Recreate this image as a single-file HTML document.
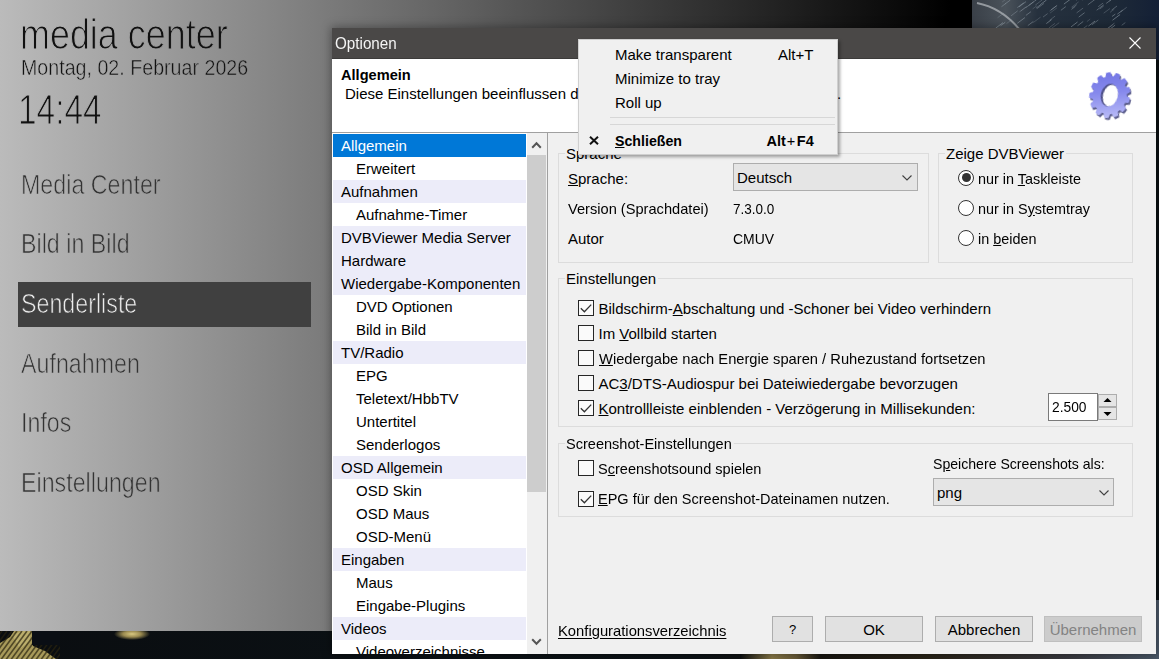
<!DOCTYPE html><html><head><meta charset="utf-8"><style>
html,body{margin:0;padding:0;width:1159px;height:659px;overflow:hidden;background:#0b1012}
.r{position:absolute}
.t{position:absolute;white-space:nowrap;font-family:"Liberation Sans",sans-serif}
u{text-decoration:underline;text-underline-offset:1px}
</style></head><body>
<div class="r" style="left:0px;top:600px;width:1159px;height:59px;background:linear-gradient(90deg,#0a0d10 0%,#0b1115 40%,#0c1216 60%,#171510 70%,#2a2418 80%,#3a3a40 92%,#4a5868 100%)"></div>
<svg class="r" style="left:0;top:631px" width="60" height="28" viewBox="0 0 60 28"><path d="M0 12 L10 6 L14 0 L32 0 L33 15 L45 20 L56 28 L0 28 Z" fill="#a89a5a"/><path d="M12 4 L22 0 L30 0 L30 10 L20 18 Z" fill="#c8bc78" fill-opacity="0.6"/><path d="M-20 30 L2 0" stroke="#2a2410" stroke-opacity="0.7" stroke-width="1.6"/><path d="M-15 30 L7 0" stroke="#2a2410" stroke-opacity="0.7" stroke-width="1.6"/><path d="M-10 30 L12 0" stroke="#2a2410" stroke-opacity="0.7" stroke-width="1.6"/><path d="M-5 30 L17 0" stroke="#2a2410" stroke-opacity="0.7" stroke-width="1.6"/><path d="M0 30 L22 0" stroke="#2a2410" stroke-opacity="0.7" stroke-width="1.6"/><path d="M5 30 L27 0" stroke="#2a2410" stroke-opacity="0.7" stroke-width="1.6"/><path d="M10 30 L32 0" stroke="#2a2410" stroke-opacity="0.7" stroke-width="1.6"/><path d="M15 30 L37 0" stroke="#2a2410" stroke-opacity="0.7" stroke-width="1.6"/><path d="M20 30 L42 0" stroke="#2a2410" stroke-opacity="0.7" stroke-width="1.6"/><path d="M25 30 L47 0" stroke="#2a2410" stroke-opacity="0.7" stroke-width="1.6"/><path d="M30 30 L52 0" stroke="#2a2410" stroke-opacity="0.7" stroke-width="1.6"/><path d="M35 30 L57 0" stroke="#2a2410" stroke-opacity="0.7" stroke-width="1.6"/><path d="M40 30 L62 0" stroke="#2a2410" stroke-opacity="0.7" stroke-width="1.6"/><path d="M45 30 L67 0" stroke="#2a2410" stroke-opacity="0.7" stroke-width="1.6"/><path d="M50 30 L72 0" stroke="#2a2410" stroke-opacity="0.7" stroke-width="1.6"/><path d="M55 30 L77 0" stroke="#2a2410" stroke-opacity="0.7" stroke-width="1.6"/><rect x="32" y="0" width="28" height="14" fill="#0a0e14"/></svg>
<div class="r" style="left:110px;top:631px;width:45px;height:10px;background:radial-gradient(ellipse 18px 6px at 22px 3px,#d8c880 0%,#9a8a50 50%,rgba(10,13,16,0) 100%)"></div>
<div class="r" style="left:740px;top:653px;width:80px;height:6px;background:linear-gradient(90deg,#0a0d10,#8a7a48 40%,#6a5c38 70%,#1a1812)"></div>
<svg class="r" style="left:972px;top:0" width="187" height="60" viewBox="0 0 187 60"><defs><linearGradient id="tr" x1="0" y1="0" x2="1" y2="0"><stop offset="0" stop-color="#3a4048"/><stop offset="0.18" stop-color="#4a525a"/><stop offset="0.35" stop-color="#26313e"/><stop offset="0.75" stop-color="#1e2a38"/><stop offset="1" stop-color="#142036"/></linearGradient></defs><rect width="187" height="60" fill="url(#tr)"/><path d="M5 3 Q 30 8 48 30" stroke="#b8bcc0" stroke-opacity="0.7" stroke-width="2" fill="none"/><path d="M53.9 15.4l5.0 -3.7" stroke="#9aa6b0" stroke-opacity="0.46" stroke-width="1"/><path d="M104.3 0.1l3.3 -2.4" stroke="#9aa6b0" stroke-opacity="0.54" stroke-width="1"/><path d="M56.7 5.5l8.0 -6.0" stroke="#9aa6b0" stroke-opacity="0.41" stroke-width="1"/><path d="M131.7 13.2l6.3 -4.7" stroke="#9aa6b0" stroke-opacity="0.30" stroke-width="1"/><path d="M105.5 25.8l5.7 -4.3" stroke="#9aa6b0" stroke-opacity="0.51" stroke-width="1"/><path d="M110.3 0.0l6.8 -5.1" stroke="#9aa6b0" stroke-opacity="0.46" stroke-width="1"/><path d="M62.2 -1.0l7.4 -5.5" stroke="#9aa6b0" stroke-opacity="0.42" stroke-width="1"/><path d="M116.4 26.1l6.6 -5.0" stroke="#9aa6b0" stroke-opacity="0.57" stroke-width="1"/><path d="M74.3 23.6l5.3 -4.0" stroke="#9aa6b0" stroke-opacity="0.58" stroke-width="1"/><path d="M137.3 1.1l3.9 -2.9" stroke="#9aa6b0" stroke-opacity="0.33" stroke-width="1"/><path d="M148.5 12.0l6.2 -4.7" stroke="#9aa6b0" stroke-opacity="0.36" stroke-width="1"/><path d="M88.9 10.3l4.9 -3.7" stroke="#9aa6b0" stroke-opacity="0.45" stroke-width="1"/><path d="M99.0 26.9l6.5 -4.9" stroke="#9aa6b0" stroke-opacity="0.58" stroke-width="1"/><path d="M134.3 29.7l6.4 -4.8" stroke="#9aa6b0" stroke-opacity="0.31" stroke-width="1"/><path d="M134.9 28.9l7.5 -5.7" stroke="#9aa6b0" stroke-opacity="0.45" stroke-width="1"/><path d="M115.8 4.8l7.2 -5.4" stroke="#9aa6b0" stroke-opacity="0.45" stroke-width="1"/><path d="M60.0 0.0l7.3 -5.5" stroke="#9aa6b0" stroke-opacity="0.60" stroke-width="1"/><path d="M34.5 23.6l5.2 -3.9" stroke="#9aa6b0" stroke-opacity="0.30" stroke-width="1"/><path d="M61.2 22.6l7.4 -5.5" stroke="#9aa6b0" stroke-opacity="0.27" stroke-width="1"/><path d="M102.9 -0.6l6.6 -5.0" stroke="#9aa6b0" stroke-opacity="0.37" stroke-width="1"/><path d="M137.5 29.4l5.6 -4.2" stroke="#9aa6b0" stroke-opacity="0.60" stroke-width="1"/><path d="M63.3 0.5l6.1 -4.6" stroke="#9aa6b0" stroke-opacity="0.26" stroke-width="1"/><path d="M48.7 11.1l6.1 -4.6" stroke="#9aa6b0" stroke-opacity="0.30" stroke-width="1"/><path d="M28.5 25.8l4.7 -3.5" stroke="#9aa6b0" stroke-opacity="0.59" stroke-width="1"/><path d="M139.6 10.1l5.4 -4.1" stroke="#9aa6b0" stroke-opacity="0.43" stroke-width="1"/><path d="M106.7 17.1l5.9 -4.4" stroke="#9aa6b0" stroke-opacity="0.47" stroke-width="1"/><path d="M145.3 14.2l5.3 -4.0" stroke="#9aa6b0" stroke-opacity="0.50" stroke-width="1"/><path d="M53.9 7.6l7.9 -5.9" stroke="#9aa6b0" stroke-opacity="0.43" stroke-width="1"/><path d="M94.3 -1.6l5.2 -3.9" stroke="#9aa6b0" stroke-opacity="0.45" stroke-width="1"/><path d="M25.6 17.7l6.2 -4.7" stroke="#9aa6b0" stroke-opacity="0.27" stroke-width="1"/><path d="M104.6 12.9l6.5 -4.8" stroke="#9aa6b0" stroke-opacity="0.37" stroke-width="1"/><path d="M114.9 21.6l3.3 -2.5" stroke="#9aa6b0" stroke-opacity="0.27" stroke-width="1"/><path d="M110.9 28.8l4.4 -3.3" stroke="#9aa6b0" stroke-opacity="0.41" stroke-width="1"/><path d="M100.0 8.2l4.9 -3.7" stroke="#9aa6b0" stroke-opacity="0.36" stroke-width="1"/><path d="M71.0 17.1l4.6 -3.5" stroke="#9aa6b0" stroke-opacity="0.38" stroke-width="1"/><path d="M123.4 -1.1l5.9 -4.4" stroke="#9aa6b0" stroke-opacity="0.51" stroke-width="1"/><path d="M63.3 5.1l7.1 -5.3" stroke="#9aa6b0" stroke-opacity="0.33" stroke-width="1"/><path d="M47.4 11.9l6.6 -4.9" stroke="#9aa6b0" stroke-opacity="0.29" stroke-width="1"/><path d="M64.9 8.7l7.2 -5.4" stroke="#9aa6b0" stroke-opacity="0.40" stroke-width="1"/><path d="M134.2 3.4l4.8 -3.6" stroke="#9aa6b0" stroke-opacity="0.48" stroke-width="1"/><path d="M138.0 12.4l4.3 -3.2" stroke="#9aa6b0" stroke-opacity="0.29" stroke-width="1"/><path d="M91.9 4.1l7.1 -5.3" stroke="#9aa6b0" stroke-opacity="0.54" stroke-width="1"/><path d="M46.9 6.9l7.1 -5.3" stroke="#9aa6b0" stroke-opacity="0.47" stroke-width="1"/><path d="M127.8 9.0l3.8 -2.9" stroke="#9aa6b0" stroke-opacity="0.35" stroke-width="1"/><path d="M126.2 6.7l4.9 -3.6" stroke="#9aa6b0" stroke-opacity="0.40" stroke-width="1"/><path d="M77.6 11.1l7.6 -5.7" stroke="#9aa6b0" stroke-opacity="0.30" stroke-width="1"/><path d="M23.6 28.2l7.4 -5.6" stroke="#9aa6b0" stroke-opacity="0.60" stroke-width="1"/><path d="M79.5 28.4l7.7 -5.7" stroke="#9aa6b0" stroke-opacity="0.33" stroke-width="1"/><path d="M119.9 24.8l6.4 -4.8" stroke="#9aa6b0" stroke-opacity="0.43" stroke-width="1"/><path d="M60.6 8.9l4.3 -3.2" stroke="#9aa6b0" stroke-opacity="0.27" stroke-width="1"/><path d="M99.5 7.2l7.1 -5.3" stroke="#9aa6b0" stroke-opacity="0.27" stroke-width="1"/><path d="M140.5 20.2l7.6 -5.7" stroke="#9aa6b0" stroke-opacity="0.56" stroke-width="1"/><path d="M140.0 16.5l3.3 -2.4" stroke="#9aa6b0" stroke-opacity="0.51" stroke-width="1"/><path d="M45.3 7.6l6.4 -4.8" stroke="#9aa6b0" stroke-opacity="0.43" stroke-width="1"/><path d="M76.8 28.0l6.1 -4.6" stroke="#9aa6b0" stroke-opacity="0.37" stroke-width="1"/><path d="M55.8 25.6l5.5 -4.1" stroke="#9aa6b0" stroke-opacity="0.52" stroke-width="1"/><path d="M68.7 4.3l5.8 -4.3" stroke="#9aa6b0" stroke-opacity="0.54" stroke-width="1"/><path d="M45.3 23.3l7.6 -5.7" stroke="#9aa6b0" stroke-opacity="0.53" stroke-width="1"/><path d="M130.1 -1.8l6.2 -4.7" stroke="#9aa6b0" stroke-opacity="0.55" stroke-width="1"/><path d="M29.5 6.7l4.5 -3.4" stroke="#9aa6b0" stroke-opacity="0.43" stroke-width="1"/><path d="M78.0 13.1l6.9 -5.2" stroke="#9aa6b0" stroke-opacity="0.25" stroke-width="1"/><path d="M30.1 2.1l3.8 -2.8" stroke="#9aa6b0" stroke-opacity="0.27" stroke-width="1"/><path d="M149.7 25.3l3.6 -2.7" stroke="#9aa6b0" stroke-opacity="0.43" stroke-width="1"/><path d="M64.1 8.1l4.9 -3.7" stroke="#9aa6b0" stroke-opacity="0.48" stroke-width="1"/><path d="M99.3 9.5l4.1 -3.1" stroke="#9aa6b0" stroke-opacity="0.37" stroke-width="1"/><path d="M39.1 15.8l6.6 -5.0" stroke="#9aa6b0" stroke-opacity="0.38" stroke-width="1"/><path d="M33.4 3.7l5.0 -3.7" stroke="#9aa6b0" stroke-opacity="0.46" stroke-width="1"/><path d="M124.7 10.2l7.0 -5.3" stroke="#9aa6b0" stroke-opacity="0.47" stroke-width="1"/><path d="M79.1 9.9l5.6 -4.2" stroke="#9aa6b0" stroke-opacity="0.50" stroke-width="1"/><path d="M77.7 20.2l5.4 -4.1" stroke="#9aa6b0" stroke-opacity="0.34" stroke-width="1"/></svg>
<div class="r" style="left:0px;top:0px;width:972px;height:631px;background:linear-gradient(90deg,#bbbbbb 0%,#000 950px)"></div>
<div class="t" style="left:20px;top:13.10px;font-size:43px;line-height:43px;font-weight:400;color:#111;transform:scaleX(0.835);transform-origin:0 0;"><span style="-webkit-text-stroke:1.1px rgb(180,180,180)">m</span><span style="-webkit-text-stroke:1.1px rgb(175,175,175)">e</span><span style="-webkit-text-stroke:1.1px rgb(171,171,171)">d</span><span style="-webkit-text-stroke:1.1px rgb(169,169,169)">i</span><span style="-webkit-text-stroke:1.1px rgb(166,166,166)">a</span><span style="-webkit-text-stroke:1.1px rgb(163,163,163)"> </span><span style="-webkit-text-stroke:1.1px rgb(160,160,160)">c</span><span style="-webkit-text-stroke:1.1px rgb(156,156,156)">e</span><span style="-webkit-text-stroke:1.1px rgb(152,152,152)">n</span><span style="-webkit-text-stroke:1.1px rgb(149,149,149)">t</span><span style="-webkit-text-stroke:1.1px rgb(147,147,147)">e</span><span style="-webkit-text-stroke:1.1px rgb(143,143,143)">r</span></div>
<div class="t" style="left:20.5px;top:57.38px;font-size:22px;line-height:22px;font-weight:400;color:#111;transform:scaleX(0.892);transform-origin:0 0;"><span style="-webkit-text-stroke:0.5px rgb(181,181,181)">M</span><span style="-webkit-text-stroke:0.5px rgb(179,179,179)">o</span><span style="-webkit-text-stroke:0.5px rgb(177,177,177)">n</span><span style="-webkit-text-stroke:0.5px rgb(175,175,175)">t</span><span style="-webkit-text-stroke:0.5px rgb(173,173,173)">a</span><span style="-webkit-text-stroke:0.5px rgb(171,171,171)">g</span><span style="-webkit-text-stroke:0.5px rgb(170,170,170)">,</span><span style="-webkit-text-stroke:0.5px rgb(168,168,168)"> </span><span style="-webkit-text-stroke:0.5px rgb(167,167,167)">0</span><span style="-webkit-text-stroke:0.5px rgb(165,165,165)">2</span><span style="-webkit-text-stroke:0.5px rgb(163,163,163)">.</span><span style="-webkit-text-stroke:0.5px rgb(162,162,162)"> </span><span style="-webkit-text-stroke:0.5px rgb(160,160,160)">F</span><span style="-webkit-text-stroke:0.5px rgb(158,158,158)">e</span><span style="-webkit-text-stroke:0.5px rgb(156,156,156)">b</span><span style="-webkit-text-stroke:0.5px rgb(154,154,154)">r</span><span style="-webkit-text-stroke:0.5px rgb(152,152,152)">u</span><span style="-webkit-text-stroke:0.5px rgb(150,150,150)">a</span><span style="-webkit-text-stroke:0.5px rgb(149,149,149)">r</span><span style="-webkit-text-stroke:0.5px rgb(147,147,147)"> </span><span style="-webkit-text-stroke:0.5px rgb(146,146,146)">2</span><span style="-webkit-text-stroke:0.5px rgb(144,144,144)">0</span><span style="-webkit-text-stroke:0.5px rgb(142,142,142)">2</span><span style="-webkit-text-stroke:0.5px rgb(139,139,139)">6</span></div>
<div class="t" style="left:18px;top:88.65px;font-size:42px;line-height:42px;font-weight:400;color:#111;transform:scaleX(0.795);transform-origin:0 0;"><span style="-webkit-text-stroke:1.1px rgb(182,182,182)">1</span><span style="-webkit-text-stroke:1.1px rgb(178,178,178)">4</span><span style="-webkit-text-stroke:1.1px rgb(175,175,175)">:</span><span style="-webkit-text-stroke:1.1px rgb(172,172,172)">4</span><span style="-webkit-text-stroke:1.1px rgb(169,169,169)">4</span></div>
<div class="r" style="left:18px;top:282px;width:293px;height:45px;background:#404040"></div>
<div class="t" style="left:20.5px;top:170.52px;font-size:27.5px;line-height:27.5px;font-weight:400;color:#333;transform:scaleX(0.845);transform-origin:0 0;"><span style="-webkit-text-stroke:0.7px rgb(181,181,181)">M</span><span style="-webkit-text-stroke:0.7px rgb(178,178,178)">e</span><span style="-webkit-text-stroke:0.7px rgb(175,175,175)">d</span><span style="-webkit-text-stroke:0.7px rgb(174,174,174)">i</span><span style="-webkit-text-stroke:0.7px rgb(172,172,172)">a</span><span style="-webkit-text-stroke:0.7px rgb(170,170,170)"> </span><span style="-webkit-text-stroke:0.7px rgb(168,168,168)">C</span><span style="-webkit-text-stroke:0.7px rgb(165,165,165)">e</span><span style="-webkit-text-stroke:0.7px rgb(162,162,162)">n</span><span style="-webkit-text-stroke:0.7px rgb(160,160,160)">t</span><span style="-webkit-text-stroke:0.7px rgb(158,158,158)">e</span><span style="-webkit-text-stroke:0.7px rgb(156,156,156)">r</span></div>
<div class="t" style="left:20.5px;top:230.24px;font-size:27.5px;line-height:27.5px;font-weight:400;color:#333;transform:scaleX(0.845);transform-origin:0 0;"><span style="-webkit-text-stroke:0.7px rgb(181,181,181)">B</span><span style="-webkit-text-stroke:0.7px rgb(179,179,179)">i</span><span style="-webkit-text-stroke:0.7px rgb(178,178,178)">l</span><span style="-webkit-text-stroke:0.7px rgb(177,177,177)">d</span><span style="-webkit-text-stroke:0.7px rgb(175,175,175)"> </span><span style="-webkit-text-stroke:0.7px rgb(174,174,174)">i</span><span style="-webkit-text-stroke:0.7px rgb(172,172,172)">n</span><span style="-webkit-text-stroke:0.7px rgb(170,170,170)"> </span><span style="-webkit-text-stroke:0.7px rgb(168,168,168)">B</span><span style="-webkit-text-stroke:0.7px rgb(166,166,166)">i</span><span style="-webkit-text-stroke:0.7px rgb(165,165,165)">l</span><span style="-webkit-text-stroke:0.7px rgb(163,163,163)">d</span></div>
<div class="t" style="left:20.5px;top:290.46px;font-size:27.5px;line-height:27.5px;font-weight:400;color:#ececec;transform:scaleX(0.845);transform-origin:0 0;-webkit-text-stroke:0.7px #404040;">Senderliste</div>
<div class="t" style="left:20.5px;top:349.68px;font-size:27.5px;line-height:27.5px;font-weight:400;color:#333;transform:scaleX(0.845);transform-origin:0 0;"><span style="-webkit-text-stroke:0.7px rgb(181,181,181)">A</span><span style="-webkit-text-stroke:0.7px rgb(179,179,179)">u</span><span style="-webkit-text-stroke:0.7px rgb(177,177,177)">f</span><span style="-webkit-text-stroke:0.7px rgb(175,175,175)">n</span><span style="-webkit-text-stroke:0.7px rgb(172,172,172)">a</span><span style="-webkit-text-stroke:0.7px rgb(170,170,170)">h</span><span style="-webkit-text-stroke:0.7px rgb(167,167,167)">m</span><span style="-webkit-text-stroke:0.7px rgb(163,163,163)">e</span><span style="-webkit-text-stroke:0.7px rgb(161,161,161)">n</span></div>
<div class="t" style="left:20.5px;top:409.40px;font-size:27.5px;line-height:27.5px;font-weight:400;color:#333;transform:scaleX(0.845);transform-origin:0 0;"><span style="-webkit-text-stroke:0.7px rgb(182,182,182)">I</span><span style="-webkit-text-stroke:0.7px rgb(180,180,180)">n</span><span style="-webkit-text-stroke:0.7px rgb(179,179,179)">f</span><span style="-webkit-text-stroke:0.7px rgb(177,177,177)">o</span><span style="-webkit-text-stroke:0.7px rgb(174,174,174)">s</span></div>
<div class="t" style="left:20.5px;top:469.12px;font-size:27.5px;line-height:27.5px;font-weight:400;color:#333;transform:scaleX(0.845);transform-origin:0 0;"><span style="-webkit-text-stroke:0.7px rgb(181,181,181)">E</span><span style="-webkit-text-stroke:0.7px rgb(179,179,179)">i</span><span style="-webkit-text-stroke:0.7px rgb(178,178,178)">n</span><span style="-webkit-text-stroke:0.7px rgb(175,175,175)">s</span><span style="-webkit-text-stroke:0.7px rgb(173,173,173)">t</span><span style="-webkit-text-stroke:0.7px rgb(172,172,172)">e</span><span style="-webkit-text-stroke:0.7px rgb(170,170,170)">l</span><span style="-webkit-text-stroke:0.7px rgb(169,169,169)">l</span><span style="-webkit-text-stroke:0.7px rgb(167,167,167)">u</span><span style="-webkit-text-stroke:0.7px rgb(164,164,164)">n</span><span style="-webkit-text-stroke:0.7px rgb(162,162,162)">g</span><span style="-webkit-text-stroke:0.7px rgb(159,159,159)">e</span><span style="-webkit-text-stroke:0.7px rgb(157,157,157)">n</span></div>
<div class="r" style="left:332px;top:28px;width:824px;height:626px;background:#f0f0f0;box-shadow:0 0 9px 1px rgba(0,0,0,0.35)"></div>
<div class="r" style="left:332px;top:28px;width:824px;height:31px;background:#4a4847;border-bottom:1px solid #3c3b3a;box-sizing:border-box"></div>
<div class="t" style="left:335px;top:35.66px;font-size:16px;line-height:16px;font-weight:400;color:#f4f4f4;transform:scaleX(0.95);transform-origin:0 0;">Optionen</div>
<svg class="r" style="left:1129px;top:37px" width="12" height="12" viewBox="0 0 12 12"><path d="M0.5 0.5L11.5 11.5M11.5 0.5L0.5 11.5" stroke="#fff" stroke-width="1.1"/></svg>
<div class="r" style="left:332px;top:59px;width:824px;height:73px;background:#fff"></div>
<div class="r" style="left:332px;top:132px;width:824px;height:1px;background:#a0a0a0"></div>
<div class="t" style="left:341px;top:67.64px;font-size:14.6px;line-height:14.6px;font-weight:700;color:#000;">Allgemein</div>
<div class="t" style="left:345px;top:86.30px;font-size:15px;line-height:15px;font-weight:400;color:#000;">Diese Einstellungen beeinflussen das Verhalten</div>
<div class="t" style="left:837px;top:86.30px;font-size:15px;line-height:15px;font-weight:400;color:#000;">.</div>
<div class="r" style="left:0;top:0;width:1159px;height:654px;overflow:hidden">
<div class="r" style="left:332px;top:133px;width:216px;height:521px;background:#fff"></div>
<div class="r" style="left:333px;top:134px;width:193px;height:23px;background:#0078d7"></div>
<div class="t" style="left:341px;top:138.30px;font-size:15px;line-height:15px;font-weight:400;color:#fff;">Allgemein</div>
<div class="t" style="left:356px;top:161.30px;font-size:15px;line-height:15px;font-weight:400;color:#000;">Erweitert</div>
<div class="r" style="left:333px;top:180px;width:193px;height:23px;background:#ececf9"></div>
<div class="t" style="left:341px;top:184.30px;font-size:15px;line-height:15px;font-weight:400;color:#000;">Aufnahmen</div>
<div class="t" style="left:356px;top:207.30px;font-size:15px;line-height:15px;font-weight:400;color:#000;">Aufnahme-Timer</div>
<div class="r" style="left:333px;top:226px;width:193px;height:23px;background:#ececf9"></div>
<div class="t" style="left:341px;top:230.30px;font-size:15px;line-height:15px;font-weight:400;color:#000;">DVBViewer Media Server</div>
<div class="r" style="left:333px;top:249px;width:193px;height:23px;background:#ececf9"></div>
<div class="t" style="left:341px;top:253.30px;font-size:15px;line-height:15px;font-weight:400;color:#000;">Hardware</div>
<div class="r" style="left:333px;top:272px;width:193px;height:23px;background:#ececf9"></div>
<div class="t" style="left:341px;top:276.30px;font-size:15px;line-height:15px;font-weight:400;color:#000;">Wiedergabe-Komponenten</div>
<div class="t" style="left:356px;top:299.30px;font-size:15px;line-height:15px;font-weight:400;color:#000;">DVD Optionen</div>
<div class="t" style="left:356px;top:322.30px;font-size:15px;line-height:15px;font-weight:400;color:#000;">Bild in Bild</div>
<div class="r" style="left:333px;top:341px;width:193px;height:23px;background:#ececf9"></div>
<div class="t" style="left:341px;top:345.30px;font-size:15px;line-height:15px;font-weight:400;color:#000;">TV/Radio</div>
<div class="t" style="left:356px;top:368.30px;font-size:15px;line-height:15px;font-weight:400;color:#000;">EPG</div>
<div class="t" style="left:356px;top:391.30px;font-size:15px;line-height:15px;font-weight:400;color:#000;">Teletext/HbbTV</div>
<div class="t" style="left:356px;top:414.30px;font-size:15px;line-height:15px;font-weight:400;color:#000;">Untertitel</div>
<div class="t" style="left:356px;top:437.30px;font-size:15px;line-height:15px;font-weight:400;color:#000;">Senderlogos</div>
<div class="r" style="left:333px;top:456px;width:193px;height:23px;background:#ececf9"></div>
<div class="t" style="left:341px;top:460.30px;font-size:15px;line-height:15px;font-weight:400;color:#000;">OSD Allgemein</div>
<div class="t" style="left:356px;top:483.30px;font-size:15px;line-height:15px;font-weight:400;color:#000;">OSD Skin</div>
<div class="t" style="left:356px;top:506.30px;font-size:15px;line-height:15px;font-weight:400;color:#000;">OSD Maus</div>
<div class="t" style="left:356px;top:529.30px;font-size:15px;line-height:15px;font-weight:400;color:#000;">OSD-Menü</div>
<div class="r" style="left:333px;top:548px;width:193px;height:23px;background:#ececf9"></div>
<div class="t" style="left:341px;top:552.30px;font-size:15px;line-height:15px;font-weight:400;color:#000;">Eingaben</div>
<div class="t" style="left:356px;top:575.30px;font-size:15px;line-height:15px;font-weight:400;color:#000;">Maus</div>
<div class="t" style="left:356px;top:598.30px;font-size:15px;line-height:15px;font-weight:400;color:#000;">Eingabe-Plugins</div>
<div class="r" style="left:333px;top:617px;width:193px;height:23px;background:#ececf9"></div>
<div class="t" style="left:341px;top:621.30px;font-size:15px;line-height:15px;font-weight:400;color:#000;">Videos</div>
<div class="t" style="left:356px;top:644.30px;font-size:15px;line-height:15px;font-weight:400;color:#000;">Videoverzeichnisse</div>
<div class="r" style="left:527px;top:133px;width:20px;height:521px;background:#f0f0f0"></div>
<div class="r" style="left:527px;top:155px;width:19px;height:337px;background:#cdcdcd"></div>
<svg class="r" style="left:531px;top:141px" width="11" height="8" viewBox="0 0 11 8"><path d="M1.2 6.8L5.5 2.3L9.8 6.8" stroke="#555" stroke-width="2" fill="none"/></svg>
<svg class="r" style="left:531px;top:638px" width="11" height="8" viewBox="0 0 11 8"><path d="M1.2 1.2L5.5 5.7L9.8 1.2" stroke="#555" stroke-width="2" fill="none"/></svg>
<div class="r" style="left:547px;top:133px;width:1px;height:521px;background:#a0a0a0"></div>
</div>
<div class="r" style="left:558px;top:153px;width:371px;height:110px;border:1px solid #dcdcdc;box-sizing:border-box"></div>
<div class="t" style="left:566px;top:146.00px;font-size:15px;line-height:15px;font-weight:400;color:#000;margin-left:-1px;transform:scaleX(1);transform-origin:0 0;"><span style="background:#f0f0f0;padding:0 2px 0 1px">Sprache</span></div>
<div class="t" style="left:568px;top:171.00px;font-size:15px;line-height:15px;font-weight:400;color:#000;"><u>S</u>prache:</div>
<div class="r" style="left:733px;top:163px;width:185px;height:28px;background:#e5e5e5;border:1px solid #adadad;box-sizing:border-box"></div>
<div class="t" style="left:737px;top:170.30px;font-size:15px;line-height:15px;font-weight:400;color:#000;">Deutsch</div>
<svg class="r" style="left:900px;top:173.5px" width="14" height="8" viewBox="0 0 14 8"><path d="M2.5 1.5L7 6L11.5 1.5" stroke="#404040" stroke-width="1.1" fill="none"/></svg>
<div class="t" style="left:568px;top:200.80px;font-size:15px;line-height:15px;font-weight:400;color:#000;transform:scaleX(0.975);transform-origin:0 0;">Version (Sprachdatei)</div>
<div class="t" style="left:733px;top:200.80px;font-size:15px;line-height:15px;font-weight:400;color:#000;transform:scaleX(0.9);transform-origin:0 0;">7.3.0.0</div>
<div class="t" style="left:568px;top:230.80px;font-size:15px;line-height:15px;font-weight:400;color:#000;">Autor</div>
<div class="t" style="left:733px;top:230.80px;font-size:15px;line-height:15px;font-weight:400;color:#000;transform:scaleX(0.93);transform-origin:0 0;">CMUV</div>
<div class="r" style="left:938px;top:153px;width:195px;height:110px;border:1px solid #dcdcdc;box-sizing:border-box"></div>
<div class="t" style="left:946px;top:146.00px;font-size:15px;line-height:15px;font-weight:400;color:#000;margin-left:-1px;transform:scaleX(1);transform-origin:0 0;"><span style="background:#f0f0f0;padding:0 2px 0 1px">Zeige DVBViewer</span></div>
<div class="r" style="left:958px;top:169.8px;width:16px;height:16px;border:1.2px solid #333;border-radius:50%;background:#fff;box-sizing:border-box"></div>
<div class="r" style="left:961.5px;top:173.3px;width:9px;height:9px;border-radius:50%;background:#333"></div>
<div class="t" style="left:978px;top:170.70px;font-size:15px;line-height:15px;font-weight:400;color:#000;transform:scaleX(0.96);transform-origin:0 0;">nur in <u>T</u>askleiste</div>
<div class="r" style="left:958px;top:199.8px;width:16px;height:16px;border:1.2px solid #333;border-radius:50%;background:#fff;box-sizing:border-box"></div>
<div class="t" style="left:978px;top:200.70px;font-size:15px;line-height:15px;font-weight:400;color:#000;transform:scaleX(0.96);transform-origin:0 0;">nur in S<u>y</u>stemtray</div>
<div class="r" style="left:958px;top:229.8px;width:16px;height:16px;border:1.2px solid #333;border-radius:50%;background:#fff;box-sizing:border-box"></div>
<div class="t" style="left:978px;top:230.70px;font-size:15px;line-height:15px;font-weight:400;color:#000;transform:scaleX(0.96);transform-origin:0 0;">in <u>b</u>eiden</div>
<div class="r" style="left:558px;top:278px;width:575px;height:149px;border:1px solid #dcdcdc;box-sizing:border-box"></div>
<div class="t" style="left:566px;top:270.90px;font-size:15px;line-height:15px;font-weight:400;color:#000;margin-left:-1px;transform:scaleX(1);transform-origin:0 0;"><span style="background:#f0f0f0;padding:0 2px 0 1px">Einstellungen</span></div>
<div class="r" style="left:578px;top:300px;width:16px;height:16px;border:1.2px solid #262626;background:#fafafa;box-sizing:border-box"></div>
<svg class="r" style="left:578px;top:300px" width="16" height="16" viewBox="0 0 16 16"><path d="M2.8 8.3L6.4 11.8L13.2 4.6" stroke="#333" stroke-width="1.3" fill="none"/></svg>
<div class="t" style="left:598.5px;top:301.10px;font-size:15px;line-height:15px;font-weight:400;color:#000;">Bildschirm-<u>A</u>bschaltung und -Schoner bei Video verhindern</div>
<div class="r" style="left:578px;top:325px;width:16px;height:16px;border:1.2px solid #262626;background:#fafafa;box-sizing:border-box"></div>
<div class="t" style="left:598.5px;top:326.10px;font-size:15px;line-height:15px;font-weight:400;color:#000;">Im <u>V</u>ollbild starten</div>
<div class="r" style="left:578px;top:350px;width:16px;height:16px;border:1.2px solid #262626;background:#fafafa;box-sizing:border-box"></div>
<div class="t" style="left:598.5px;top:351.10px;font-size:15px;line-height:15px;font-weight:400;color:#000;transform:scaleX(0.98);transform-origin:0 0;"><u>W</u>iedergabe nach Energie sparen / Ruhezustand fortsetzen</div>
<div class="r" style="left:578px;top:375px;width:16px;height:16px;border:1.2px solid #262626;background:#fafafa;box-sizing:border-box"></div>
<div class="t" style="left:598.5px;top:376.10px;font-size:15px;line-height:15px;font-weight:400;color:#000;">AC<u>3</u>/DTS-Audiospur bei Dateiwiedergabe bevorzugen</div>
<div class="r" style="left:578px;top:400px;width:16px;height:16px;border:1.2px solid #262626;background:#fafafa;box-sizing:border-box"></div>
<svg class="r" style="left:578px;top:400px" width="16" height="16" viewBox="0 0 16 16"><path d="M2.8 8.3L6.4 11.8L13.2 4.6" stroke="#333" stroke-width="1.3" fill="none"/></svg>
<div class="t" style="left:598.5px;top:401.10px;font-size:15px;line-height:15px;font-weight:400;color:#000;"><u>K</u>ontrollleiste einblenden - Verzögerung in Millisekunden:</div>
<div class="r" style="left:1048px;top:393px;width:50px;height:28px;background:#fff;border:1px solid #7a7a7a;box-sizing:border-box"></div>
<div class="t" style="left:1051.5px;top:399.10px;font-size:15px;line-height:15px;font-weight:400;color:#000;transform:scaleX(0.92);transform-origin:0 0;">2.500</div>
<div class="r" style="left:1098px;top:394px;width:19px;height:13px;background:#e5e5e5;border:1px solid #adadad;box-sizing:border-box"></div>
<div class="r" style="left:1098px;top:407px;width:19px;height:13px;background:#e5e5e5;border:1px solid #adadad;box-sizing:border-box"></div>
<svg class="r" style="left:1103px;top:397px" width="9" height="6" viewBox="0 0 9 6"><path d="M0.5 5L4.5 1L8.5 5Z" fill="#000"/></svg>
<svg class="r" style="left:1103px;top:411px" width="9" height="6" viewBox="0 0 9 6"><path d="M0.5 1L4.5 5L8.5 1Z" fill="#000"/></svg>
<div class="r" style="left:558px;top:443px;width:575px;height:74px;border:1px solid #dcdcdc;box-sizing:border-box"></div>
<div class="t" style="left:566px;top:435.90px;font-size:15px;line-height:15px;font-weight:400;color:#000;margin-left:-1px;transform:scaleX(0.97);transform-origin:0 0;"><span style="background:#f0f0f0;padding:0 2px 0 1px">Screenshot-Einstellungen</span></div>
<div class="r" style="left:578px;top:460px;width:16px;height:16px;border:1.2px solid #262626;background:#fafafa;box-sizing:border-box"></div>
<div class="t" style="left:598px;top:461.30px;font-size:15px;line-height:15px;font-weight:400;color:#000;transform:scaleX(0.97);transform-origin:0 0;">S<u>c</u>reenshotsound spielen</div>
<div class="r" style="left:578px;top:490.5px;width:16px;height:16px;border:1.2px solid #262626;background:#fafafa;box-sizing:border-box"></div>
<svg class="r" style="left:578px;top:490.5px" width="16" height="16" viewBox="0 0 16 16"><path d="M2.8 8.3L6.4 11.8L13.2 4.6" stroke="#333" stroke-width="1.3" fill="none"/></svg>
<div class="t" style="left:598px;top:490.80px;font-size:15px;line-height:15px;font-weight:400;color:#000;transform:scaleX(0.967);transform-origin:0 0;"><u>E</u>PG für den Screenshot-Dateinamen nutzen.</div>
<div class="t" style="left:933px;top:455.90px;font-size:15px;line-height:15px;font-weight:400;color:#000;transform:scaleX(0.94);transform-origin:0 0;">S<u>p</u>eichere Screenshots als:</div>
<div class="r" style="left:933px;top:478px;width:181px;height:28px;background:#e5e5e5;border:1px solid #adadad;box-sizing:border-box"></div>
<div class="t" style="left:937px;top:485.30px;font-size:15px;line-height:15px;font-weight:400;color:#000;">png</div>
<svg class="r" style="left:1096.5px;top:489px" width="14" height="8" viewBox="0 0 14 8"><path d="M2.5 1.5L7 6L11.5 1.5" stroke="#404040" stroke-width="1.1" fill="none"/></svg>
<div class="t" style="left:558px;top:623.30px;font-size:15px;line-height:15px;font-weight:400;color:#000;transform:scaleX(0.985);transform-origin:0 0;"><u style="text-underline-offset:2px">Konfigurationsverzeichnis</u></div>
<div class="r" style="left:772px;top:616px;width:41px;height:26px;background:#e1e1e1;border:1px solid #adadad;box-sizing:border-box"></div>
<div class="t" style="left:772px;top:617px;width:41px;height:26px;line-height:26px;text-align:center;font-size:13px;color:#000">?</div>
<div class="r" style="left:825px;top:616px;width:98px;height:26px;background:#e1e1e1;border:1px solid #adadad;box-sizing:border-box"></div>
<div class="t" style="left:825px;top:617px;width:98px;height:26px;line-height:26px;text-align:center;font-size:15px;color:#000">OK</div>
<div class="r" style="left:935px;top:616px;width:98px;height:26px;background:#e1e1e1;border:1px solid #adadad;box-sizing:border-box"></div>
<div class="t" style="left:935px;top:617px;width:98px;height:26px;line-height:26px;text-align:center;font-size:15px;color:#000">Abbrechen</div>
<div class="r" style="left:1044px;top:616px;width:98px;height:26px;background:#cccccc;border:1px solid #bfbfbf;box-sizing:border-box"></div>
<div class="t" style="left:1044px;top:617px;width:98px;height:26px;line-height:26px;text-align:center;font-size:15px;color:#838383">Übernehmen</div>
<svg class="r" style="left:1080px;top:66px" width="60" height="60" viewBox="0 0 60 60">
<defs><linearGradient id="gg" x1="0.3" y1="0" x2="0.6" y2="1"><stop offset="0" stop-color="#7275e4"/><stop offset="0.45" stop-color="#8689ec"/><stop offset="1" stop-color="#b9bbf7"/></linearGradient></defs>
<g transform="translate(29.8 29.2) rotate(15) scale(0.97 1.1)" style="filter:blur(0.35px)">
<path fill="#5a5c8a" fill-rule="evenodd" transform="translate(1.6 1.4)" d="M21.00 0.00 L21.00 0.18 L21.00 0.37 L20.99 0.55 L20.99 0.73 L20.98 0.92 L20.97 1.10 L20.96 1.28 L20.95 1.46 L20.94 1.65 L20.92 1.83 L20.90 2.01 L20.88 2.20 L20.64 2.35 L20.19 2.48 L19.73 2.60 L19.28 2.71 L18.85 2.82 L18.43 2.92 L18.03 3.02 L17.66 3.11 L17.32 3.21 L17.18 3.34 L17.15 3.49 L17.12 3.64 L17.09 3.79 L17.05 3.94 L17.02 4.09 L16.98 4.23 L16.94 4.38 L16.90 4.53 L16.86 4.68 L16.82 4.82 L16.78 4.97 L16.74 5.12 L16.98 5.35 L17.25 5.61 L17.55 5.87 L17.87 6.15 L18.20 6.45 L18.55 6.75 L18.89 7.06 L19.24 7.38 L19.54 7.70 L19.47 7.87 L19.40 8.04 L19.33 8.21 L19.26 8.37 L19.18 8.54 L19.11 8.71 L19.03 8.87 L18.95 9.04 L18.87 9.21 L18.79 9.37 L18.71 9.53 L18.63 9.70 L18.54 9.86 L18.46 10.02 L18.37 10.18 L18.28 10.34 L18.19 10.50 L18.09 10.66 L18.00 10.82 L17.91 10.97 L17.81 11.13 L17.71 11.28 L17.61 11.44 L17.51 11.59 L17.36 11.71 L16.90 11.61 L16.44 11.51 L15.99 11.40 L15.55 11.29 L15.12 11.19 L14.71 11.09 L14.33 11.00 L13.97 10.92 L13.70 10.89 L13.60 11.01 L13.50 11.13 L13.41 11.25 L13.31 11.37 L13.21 11.48 L13.11 11.60 L13.01 11.71 L12.90 11.82 L12.80 11.93 L12.69 12.05 L12.59 12.16 L12.48 12.27 L12.50 12.50 L12.62 12.84 L12.76 13.21 L12.90 13.60 L13.06 14.01 L13.22 14.43 L13.38 14.86 L13.54 15.31 L13.69 15.75 L13.64 15.97 L13.50 16.09 L13.36 16.20 L13.22 16.32 L13.07 16.43 L12.93 16.55 L12.78 16.66 L12.64 16.77 L12.49 16.88 L12.34 16.99 L12.19 17.10 L12.05 17.20 L11.89 17.31 L11.74 17.41 L11.59 17.51 L11.44 17.61 L11.28 17.71 L11.13 17.81 L10.97 17.91 L10.82 18.00 L10.66 18.09 L10.50 18.19 L10.34 18.28 L10.18 18.37 L10.02 18.46 L9.71 18.25 L9.34 17.95 L8.99 17.64 L8.65 17.34 L8.31 17.04 L7.99 16.76 L7.69 16.49 L7.40 16.25 L7.14 16.03 L6.98 16.05 L6.84 16.11 L6.70 16.17 L6.56 16.23 L6.41 16.28 L6.27 16.34 L6.13 16.39 L5.99 16.44 L5.84 16.50 L5.70 16.55 L5.55 16.60 L5.41 16.64 L5.28 16.75 L5.23 17.10 L5.18 17.47 L5.13 17.88 L5.08 18.30 L5.02 18.75 L4.97 19.20 L4.90 19.67 L4.83 20.13 L4.72 20.46 L4.55 20.50 L4.37 20.54 L4.19 20.58 L4.01 20.61 L3.83 20.65 L3.65 20.68 L3.47 20.71 L3.29 20.74 L3.10 20.77 L2.92 20.80 L2.74 20.82 L2.56 20.84 L2.38 20.87 L2.20 20.88 L2.01 20.90 L1.83 20.92 L1.65 20.94 L1.46 20.95 L1.28 20.96 L1.10 20.97 L0.92 20.98 L0.73 20.99 L0.55 20.99 L0.37 21.00 L0.18 20.84 L0.00 20.40 L-0.17 19.97 L-0.34 19.54 L-0.50 19.11 L-0.65 18.71 L-0.80 18.32 L-0.94 17.96 L-1.08 17.63 L-1.22 17.46 L-1.37 17.45 L-1.53 17.43 L-1.68 17.42 L-1.83 17.40 L-1.98 17.39 L-2.13 17.37 L-2.28 17.35 L-2.44 17.33 L-2.59 17.31 L-2.74 17.28 L-2.89 17.26 L-3.04 17.23 L-3.24 17.46 L-3.45 17.76 L-3.68 18.08 L-3.92 18.43 L-4.17 18.79 L-4.42 19.17 L-4.69 19.55 L-4.97 19.93 L-5.25 20.31 L-5.44 20.28 L-5.61 20.24 L-5.79 20.19 L-5.96 20.14 L-6.14 20.08 L-6.31 20.03 L-6.49 19.97 L-6.66 19.91 L-6.84 19.86 L-7.01 19.80 L-7.18 19.73 L-7.35 19.67 L-7.53 19.61 L-7.70 19.54 L-7.87 19.47 L-8.04 19.40 L-8.21 19.33 L-8.37 19.26 L-8.54 19.18 L-8.71 19.11 L-8.87 19.03 L-9.04 18.95 L-9.21 18.87 L-9.37 18.79 L-9.53 18.71 L-9.50 18.25 L-9.45 17.78 L-9.40 17.32 L-9.35 16.86 L-9.29 16.42 L-9.24 16.00 L-9.19 15.61 L-9.16 15.24 L-9.14 14.92 L-9.27 14.84 L-9.40 14.76 L-9.53 14.68 L-9.66 14.59 L-9.79 14.51 L-9.91 14.42 L-10.04 14.34 L-10.16 14.25 L-10.29 14.16 L-10.41 14.07 L-10.53 13.98 L-10.65 13.88 L-10.86 13.90 L-11.18 14.05 L-11.52 14.23 L-11.89 14.42 L-12.27 14.62 L-12.67 14.83 L-13.08 15.05 L-13.50 15.26 L-13.92 15.46 L-14.19 15.48 L-14.32 15.36 L-14.46 15.23 L-14.59 15.11 L-14.72 14.98 L-14.85 14.85 L-14.98 14.72 L-15.11 14.59 L-15.23 14.46 L-15.36 14.32 L-15.48 14.19 L-15.61 14.05 L-15.73 13.92 L-15.85 13.78 L-15.97 13.64 L-16.09 13.50 L-16.20 13.36 L-16.32 13.22 L-16.43 13.07 L-16.55 12.93 L-16.66 12.78 L-16.77 12.64 L-16.88 12.49 L-16.99 12.34 L-17.10 12.19 L-16.99 11.90 L-16.73 11.50 L-16.47 11.11 L-16.21 10.73 L-15.96 10.36 L-15.71 10.01 L-15.48 9.67 L-15.27 9.36 L-15.08 9.06 L-15.08 8.88 L-15.16 8.75 L-15.23 8.62 L-15.31 8.48 L-15.38 8.35 L-15.45 8.22 L-15.52 8.08 L-15.59 7.94 L-15.66 7.81 L-15.73 7.67 L-15.80 7.53 L-15.86 7.40 L-15.94 7.27 L-16.29 7.25 L-16.66 7.24 L-17.06 7.24 L-17.49 7.24 L-17.94 7.25 L-18.39 7.25 L-18.86 7.24 L-19.33 7.23 L-19.73 7.18 L-19.80 7.01 L-19.86 6.84 L-19.91 6.66 L-19.97 6.49 L-20.03 6.31 L-20.08 6.14 L-20.14 5.96 L-20.19 5.79 L-20.24 5.61 L-20.28 5.44 L-20.33 5.26 L-20.38 5.08 L-20.42 4.90 L-20.46 4.72 L-20.50 4.55 L-20.54 4.37 L-20.58 4.19 L-20.61 4.01 L-20.65 3.83 L-20.68 3.65 L-20.71 3.47 L-20.74 3.29 L-20.77 3.10 L-20.80 2.92 L-20.73 2.73 L-20.32 2.49 L-19.91 2.27 L-19.50 2.05 L-19.10 1.84 L-18.71 1.64 L-18.34 1.44 L-17.99 1.26 L-17.67 1.08 L-17.48 0.92 L-17.48 0.76 L-17.49 0.61 L-17.49 0.46 L-17.50 0.31 L-17.50 0.15 L-17.50 0.00 L-17.50 -0.15 L-17.50 -0.31 L-17.49 -0.46 L-17.49 -0.61 L-17.48 -0.76 L-17.48 -0.92 L-17.67 -1.08 L-17.99 -1.26 L-18.34 -1.44 L-18.71 -1.64 L-19.10 -1.84 L-19.50 -2.05 L-19.91 -2.27 L-20.32 -2.49 L-20.73 -2.73 L-20.80 -2.92 L-20.77 -3.10 L-20.74 -3.29 L-20.71 -3.47 L-20.68 -3.65 L-20.65 -3.83 L-20.61 -4.01 L-20.58 -4.19 L-20.54 -4.37 L-20.50 -4.55 L-20.46 -4.72 L-20.42 -4.90 L-20.38 -5.08 L-20.33 -5.26 L-20.28 -5.44 L-20.24 -5.61 L-20.19 -5.79 L-20.14 -5.96 L-20.08 -6.14 L-20.03 -6.31 L-19.97 -6.49 L-19.91 -6.66 L-19.86 -6.84 L-19.80 -7.01 L-19.73 -7.18 L-19.33 -7.23 L-18.86 -7.24 L-18.39 -7.25 L-17.94 -7.25 L-17.49 -7.24 L-17.06 -7.24 L-16.66 -7.24 L-16.29 -7.25 L-15.94 -7.27 L-15.86 -7.40 L-15.80 -7.53 L-15.73 -7.67 L-15.66 -7.81 L-15.59 -7.94 L-15.52 -8.08 L-15.45 -8.22 L-15.38 -8.35 L-15.31 -8.48 L-15.23 -8.62 L-15.16 -8.75 L-15.08 -8.88 L-15.08 -9.06 L-15.27 -9.36 L-15.48 -9.67 L-15.71 -10.01 L-15.96 -10.36 L-16.21 -10.73 L-16.47 -11.11 L-16.73 -11.50 L-16.99 -11.90 L-17.10 -12.19 L-16.99 -12.34 L-16.88 -12.49 L-16.77 -12.64 L-16.66 -12.78 L-16.55 -12.93 L-16.43 -13.07 L-16.32 -13.22 L-16.20 -13.36 L-16.09 -13.50 L-15.97 -13.64 L-15.85 -13.78 L-15.73 -13.92 L-15.61 -14.05 L-15.48 -14.19 L-15.36 -14.32 L-15.23 -14.46 L-15.11 -14.59 L-14.98 -14.72 L-14.85 -14.85 L-14.72 -14.98 L-14.59 -15.11 L-14.46 -15.23 L-14.32 -15.36 L-14.19 -15.48 L-13.92 -15.46 L-13.50 -15.26 L-13.08 -15.05 L-12.67 -14.83 L-12.27 -14.62 L-11.89 -14.42 L-11.52 -14.23 L-11.18 -14.05 L-10.86 -13.90 L-10.65 -13.88 L-10.53 -13.98 L-10.41 -14.07 L-10.29 -14.16 L-10.16 -14.25 L-10.04 -14.34 L-9.91 -14.42 L-9.79 -14.51 L-9.66 -14.59 L-9.53 -14.68 L-9.40 -14.76 L-9.27 -14.84 L-9.14 -14.92 L-9.16 -15.24 L-9.19 -15.61 L-9.24 -16.00 L-9.29 -16.42 L-9.35 -16.86 L-9.40 -17.32 L-9.45 -17.78 L-9.50 -18.25 L-9.53 -18.71 L-9.37 -18.79 L-9.21 -18.87 L-9.04 -18.95 L-8.87 -19.03 L-8.71 -19.11 L-8.54 -19.18 L-8.37 -19.26 L-8.21 -19.33 L-8.04 -19.40 L-7.87 -19.47 L-7.70 -19.54 L-7.53 -19.61 L-7.35 -19.67 L-7.18 -19.73 L-7.01 -19.80 L-6.84 -19.86 L-6.66 -19.91 L-6.49 -19.97 L-6.31 -20.03 L-6.14 -20.08 L-5.96 -20.14 L-5.79 -20.19 L-5.61 -20.24 L-5.44 -20.28 L-5.25 -20.31 L-4.97 -19.93 L-4.69 -19.55 L-4.42 -19.17 L-4.17 -18.79 L-3.92 -18.43 L-3.68 -18.08 L-3.45 -17.76 L-3.24 -17.46 L-3.04 -17.23 L-2.89 -17.26 L-2.74 -17.28 L-2.59 -17.31 L-2.44 -17.33 L-2.28 -17.35 L-2.13 -17.37 L-1.98 -17.39 L-1.83 -17.40 L-1.68 -17.42 L-1.53 -17.43 L-1.37 -17.45 L-1.22 -17.46 L-1.08 -17.63 L-0.94 -17.96 L-0.80 -18.32 L-0.65 -18.71 L-0.50 -19.11 L-0.34 -19.54 L-0.17 -19.97 L-0.00 -20.40 L0.18 -20.84 L0.37 -21.00 L0.55 -20.99 L0.73 -20.99 L0.92 -20.98 L1.10 -20.97 L1.28 -20.96 L1.46 -20.95 L1.65 -20.94 L1.83 -20.92 L2.01 -20.90 L2.20 -20.88 L2.38 -20.87 L2.56 -20.84 L2.74 -20.82 L2.92 -20.80 L3.10 -20.77 L3.29 -20.74 L3.47 -20.71 L3.65 -20.68 L3.83 -20.65 L4.01 -20.61 L4.19 -20.58 L4.37 -20.54 L4.55 -20.50 L4.72 -20.46 L4.83 -20.13 L4.90 -19.67 L4.97 -19.20 L5.02 -18.75 L5.08 -18.30 L5.13 -17.88 L5.18 -17.47 L5.23 -17.10 L5.28 -16.75 L5.41 -16.64 L5.55 -16.60 L5.70 -16.55 L5.84 -16.50 L5.99 -16.44 L6.13 -16.39 L6.27 -16.34 L6.41 -16.28 L6.56 -16.23 L6.70 -16.17 L6.84 -16.11 L6.98 -16.05 L7.14 -16.03 L7.40 -16.25 L7.69 -16.49 L7.99 -16.76 L8.31 -17.04 L8.65 -17.34 L8.99 -17.64 L9.34 -17.95 L9.71 -18.25 L10.02 -18.46 L10.18 -18.37 L10.34 -18.28 L10.50 -18.19 L10.66 -18.09 L10.82 -18.00 L10.97 -17.91 L11.13 -17.81 L11.28 -17.71 L11.44 -17.61 L11.59 -17.51 L11.74 -17.41 L11.89 -17.31 L12.05 -17.20 L12.19 -17.10 L12.34 -16.99 L12.49 -16.88 L12.64 -16.77 L12.78 -16.66 L12.93 -16.55 L13.07 -16.43 L13.22 -16.32 L13.36 -16.20 L13.50 -16.09 L13.64 -15.97 L13.69 -15.75 L13.54 -15.31 L13.38 -14.86 L13.22 -14.43 L13.06 -14.01 L12.90 -13.60 L12.76 -13.21 L12.62 -12.84 L12.50 -12.50 L12.48 -12.27 L12.59 -12.16 L12.69 -12.05 L12.80 -11.93 L12.90 -11.82 L13.01 -11.71 L13.11 -11.60 L13.21 -11.48 L13.31 -11.37 L13.41 -11.25 L13.50 -11.13 L13.60 -11.01 L13.70 -10.89 L13.97 -10.92 L14.33 -11.00 L14.71 -11.09 L15.12 -11.19 L15.55 -11.29 L15.99 -11.40 L16.44 -11.51 L16.90 -11.61 L17.36 -11.71 L17.51 -11.59 L17.61 -11.44 L17.71 -11.28 L17.81 -11.13 L17.91 -10.97 L18.00 -10.82 L18.09 -10.66 L18.19 -10.50 L18.28 -10.34 L18.37 -10.18 L18.46 -10.02 L18.54 -9.86 L18.63 -9.70 L18.71 -9.53 L18.79 -9.37 L18.87 -9.21 L18.95 -9.04 L19.03 -8.87 L19.11 -8.71 L19.18 -8.54 L19.26 -8.37 L19.33 -8.21 L19.40 -8.04 L19.47 -7.87 L19.54 -7.70 L19.24 -7.38 L18.89 -7.06 L18.55 -6.75 L18.20 -6.45 L17.87 -6.15 L17.55 -5.87 L17.25 -5.61 L16.98 -5.35 L16.74 -5.12 L16.78 -4.97 L16.82 -4.82 L16.86 -4.68 L16.90 -4.53 L16.94 -4.38 L16.98 -4.23 L17.02 -4.09 L17.05 -3.94 L17.09 -3.79 L17.12 -3.64 L17.15 -3.49 L17.18 -3.34 L17.32 -3.21 L17.66 -3.11 L18.03 -3.02 L18.43 -2.92 L18.85 -2.82 L19.28 -2.71 L19.73 -2.60 L20.19 -2.48 L20.64 -2.35 L20.88 -2.20 L20.90 -2.01 L20.92 -1.83 L20.94 -1.65 L20.95 -1.46 L20.96 -1.28 L20.97 -1.10 L20.98 -0.92 L20.99 -0.73 L20.99 -0.55 L21.00 -0.37 L21.00 -0.18 Z"/>
<path fill="url(#gg)" fill-rule="evenodd" d="M21.00 0.00 L21.00 0.18 L21.00 0.37 L20.99 0.55 L20.99 0.73 L20.98 0.92 L20.97 1.10 L20.96 1.28 L20.95 1.46 L20.94 1.65 L20.92 1.83 L20.90 2.01 L20.88 2.20 L20.64 2.35 L20.19 2.48 L19.73 2.60 L19.28 2.71 L18.85 2.82 L18.43 2.92 L18.03 3.02 L17.66 3.11 L17.32 3.21 L17.18 3.34 L17.15 3.49 L17.12 3.64 L17.09 3.79 L17.05 3.94 L17.02 4.09 L16.98 4.23 L16.94 4.38 L16.90 4.53 L16.86 4.68 L16.82 4.82 L16.78 4.97 L16.74 5.12 L16.98 5.35 L17.25 5.61 L17.55 5.87 L17.87 6.15 L18.20 6.45 L18.55 6.75 L18.89 7.06 L19.24 7.38 L19.54 7.70 L19.47 7.87 L19.40 8.04 L19.33 8.21 L19.26 8.37 L19.18 8.54 L19.11 8.71 L19.03 8.87 L18.95 9.04 L18.87 9.21 L18.79 9.37 L18.71 9.53 L18.63 9.70 L18.54 9.86 L18.46 10.02 L18.37 10.18 L18.28 10.34 L18.19 10.50 L18.09 10.66 L18.00 10.82 L17.91 10.97 L17.81 11.13 L17.71 11.28 L17.61 11.44 L17.51 11.59 L17.36 11.71 L16.90 11.61 L16.44 11.51 L15.99 11.40 L15.55 11.29 L15.12 11.19 L14.71 11.09 L14.33 11.00 L13.97 10.92 L13.70 10.89 L13.60 11.01 L13.50 11.13 L13.41 11.25 L13.31 11.37 L13.21 11.48 L13.11 11.60 L13.01 11.71 L12.90 11.82 L12.80 11.93 L12.69 12.05 L12.59 12.16 L12.48 12.27 L12.50 12.50 L12.62 12.84 L12.76 13.21 L12.90 13.60 L13.06 14.01 L13.22 14.43 L13.38 14.86 L13.54 15.31 L13.69 15.75 L13.64 15.97 L13.50 16.09 L13.36 16.20 L13.22 16.32 L13.07 16.43 L12.93 16.55 L12.78 16.66 L12.64 16.77 L12.49 16.88 L12.34 16.99 L12.19 17.10 L12.05 17.20 L11.89 17.31 L11.74 17.41 L11.59 17.51 L11.44 17.61 L11.28 17.71 L11.13 17.81 L10.97 17.91 L10.82 18.00 L10.66 18.09 L10.50 18.19 L10.34 18.28 L10.18 18.37 L10.02 18.46 L9.71 18.25 L9.34 17.95 L8.99 17.64 L8.65 17.34 L8.31 17.04 L7.99 16.76 L7.69 16.49 L7.40 16.25 L7.14 16.03 L6.98 16.05 L6.84 16.11 L6.70 16.17 L6.56 16.23 L6.41 16.28 L6.27 16.34 L6.13 16.39 L5.99 16.44 L5.84 16.50 L5.70 16.55 L5.55 16.60 L5.41 16.64 L5.28 16.75 L5.23 17.10 L5.18 17.47 L5.13 17.88 L5.08 18.30 L5.02 18.75 L4.97 19.20 L4.90 19.67 L4.83 20.13 L4.72 20.46 L4.55 20.50 L4.37 20.54 L4.19 20.58 L4.01 20.61 L3.83 20.65 L3.65 20.68 L3.47 20.71 L3.29 20.74 L3.10 20.77 L2.92 20.80 L2.74 20.82 L2.56 20.84 L2.38 20.87 L2.20 20.88 L2.01 20.90 L1.83 20.92 L1.65 20.94 L1.46 20.95 L1.28 20.96 L1.10 20.97 L0.92 20.98 L0.73 20.99 L0.55 20.99 L0.37 21.00 L0.18 20.84 L0.00 20.40 L-0.17 19.97 L-0.34 19.54 L-0.50 19.11 L-0.65 18.71 L-0.80 18.32 L-0.94 17.96 L-1.08 17.63 L-1.22 17.46 L-1.37 17.45 L-1.53 17.43 L-1.68 17.42 L-1.83 17.40 L-1.98 17.39 L-2.13 17.37 L-2.28 17.35 L-2.44 17.33 L-2.59 17.31 L-2.74 17.28 L-2.89 17.26 L-3.04 17.23 L-3.24 17.46 L-3.45 17.76 L-3.68 18.08 L-3.92 18.43 L-4.17 18.79 L-4.42 19.17 L-4.69 19.55 L-4.97 19.93 L-5.25 20.31 L-5.44 20.28 L-5.61 20.24 L-5.79 20.19 L-5.96 20.14 L-6.14 20.08 L-6.31 20.03 L-6.49 19.97 L-6.66 19.91 L-6.84 19.86 L-7.01 19.80 L-7.18 19.73 L-7.35 19.67 L-7.53 19.61 L-7.70 19.54 L-7.87 19.47 L-8.04 19.40 L-8.21 19.33 L-8.37 19.26 L-8.54 19.18 L-8.71 19.11 L-8.87 19.03 L-9.04 18.95 L-9.21 18.87 L-9.37 18.79 L-9.53 18.71 L-9.50 18.25 L-9.45 17.78 L-9.40 17.32 L-9.35 16.86 L-9.29 16.42 L-9.24 16.00 L-9.19 15.61 L-9.16 15.24 L-9.14 14.92 L-9.27 14.84 L-9.40 14.76 L-9.53 14.68 L-9.66 14.59 L-9.79 14.51 L-9.91 14.42 L-10.04 14.34 L-10.16 14.25 L-10.29 14.16 L-10.41 14.07 L-10.53 13.98 L-10.65 13.88 L-10.86 13.90 L-11.18 14.05 L-11.52 14.23 L-11.89 14.42 L-12.27 14.62 L-12.67 14.83 L-13.08 15.05 L-13.50 15.26 L-13.92 15.46 L-14.19 15.48 L-14.32 15.36 L-14.46 15.23 L-14.59 15.11 L-14.72 14.98 L-14.85 14.85 L-14.98 14.72 L-15.11 14.59 L-15.23 14.46 L-15.36 14.32 L-15.48 14.19 L-15.61 14.05 L-15.73 13.92 L-15.85 13.78 L-15.97 13.64 L-16.09 13.50 L-16.20 13.36 L-16.32 13.22 L-16.43 13.07 L-16.55 12.93 L-16.66 12.78 L-16.77 12.64 L-16.88 12.49 L-16.99 12.34 L-17.10 12.19 L-16.99 11.90 L-16.73 11.50 L-16.47 11.11 L-16.21 10.73 L-15.96 10.36 L-15.71 10.01 L-15.48 9.67 L-15.27 9.36 L-15.08 9.06 L-15.08 8.88 L-15.16 8.75 L-15.23 8.62 L-15.31 8.48 L-15.38 8.35 L-15.45 8.22 L-15.52 8.08 L-15.59 7.94 L-15.66 7.81 L-15.73 7.67 L-15.80 7.53 L-15.86 7.40 L-15.94 7.27 L-16.29 7.25 L-16.66 7.24 L-17.06 7.24 L-17.49 7.24 L-17.94 7.25 L-18.39 7.25 L-18.86 7.24 L-19.33 7.23 L-19.73 7.18 L-19.80 7.01 L-19.86 6.84 L-19.91 6.66 L-19.97 6.49 L-20.03 6.31 L-20.08 6.14 L-20.14 5.96 L-20.19 5.79 L-20.24 5.61 L-20.28 5.44 L-20.33 5.26 L-20.38 5.08 L-20.42 4.90 L-20.46 4.72 L-20.50 4.55 L-20.54 4.37 L-20.58 4.19 L-20.61 4.01 L-20.65 3.83 L-20.68 3.65 L-20.71 3.47 L-20.74 3.29 L-20.77 3.10 L-20.80 2.92 L-20.73 2.73 L-20.32 2.49 L-19.91 2.27 L-19.50 2.05 L-19.10 1.84 L-18.71 1.64 L-18.34 1.44 L-17.99 1.26 L-17.67 1.08 L-17.48 0.92 L-17.48 0.76 L-17.49 0.61 L-17.49 0.46 L-17.50 0.31 L-17.50 0.15 L-17.50 0.00 L-17.50 -0.15 L-17.50 -0.31 L-17.49 -0.46 L-17.49 -0.61 L-17.48 -0.76 L-17.48 -0.92 L-17.67 -1.08 L-17.99 -1.26 L-18.34 -1.44 L-18.71 -1.64 L-19.10 -1.84 L-19.50 -2.05 L-19.91 -2.27 L-20.32 -2.49 L-20.73 -2.73 L-20.80 -2.92 L-20.77 -3.10 L-20.74 -3.29 L-20.71 -3.47 L-20.68 -3.65 L-20.65 -3.83 L-20.61 -4.01 L-20.58 -4.19 L-20.54 -4.37 L-20.50 -4.55 L-20.46 -4.72 L-20.42 -4.90 L-20.38 -5.08 L-20.33 -5.26 L-20.28 -5.44 L-20.24 -5.61 L-20.19 -5.79 L-20.14 -5.96 L-20.08 -6.14 L-20.03 -6.31 L-19.97 -6.49 L-19.91 -6.66 L-19.86 -6.84 L-19.80 -7.01 L-19.73 -7.18 L-19.33 -7.23 L-18.86 -7.24 L-18.39 -7.25 L-17.94 -7.25 L-17.49 -7.24 L-17.06 -7.24 L-16.66 -7.24 L-16.29 -7.25 L-15.94 -7.27 L-15.86 -7.40 L-15.80 -7.53 L-15.73 -7.67 L-15.66 -7.81 L-15.59 -7.94 L-15.52 -8.08 L-15.45 -8.22 L-15.38 -8.35 L-15.31 -8.48 L-15.23 -8.62 L-15.16 -8.75 L-15.08 -8.88 L-15.08 -9.06 L-15.27 -9.36 L-15.48 -9.67 L-15.71 -10.01 L-15.96 -10.36 L-16.21 -10.73 L-16.47 -11.11 L-16.73 -11.50 L-16.99 -11.90 L-17.10 -12.19 L-16.99 -12.34 L-16.88 -12.49 L-16.77 -12.64 L-16.66 -12.78 L-16.55 -12.93 L-16.43 -13.07 L-16.32 -13.22 L-16.20 -13.36 L-16.09 -13.50 L-15.97 -13.64 L-15.85 -13.78 L-15.73 -13.92 L-15.61 -14.05 L-15.48 -14.19 L-15.36 -14.32 L-15.23 -14.46 L-15.11 -14.59 L-14.98 -14.72 L-14.85 -14.85 L-14.72 -14.98 L-14.59 -15.11 L-14.46 -15.23 L-14.32 -15.36 L-14.19 -15.48 L-13.92 -15.46 L-13.50 -15.26 L-13.08 -15.05 L-12.67 -14.83 L-12.27 -14.62 L-11.89 -14.42 L-11.52 -14.23 L-11.18 -14.05 L-10.86 -13.90 L-10.65 -13.88 L-10.53 -13.98 L-10.41 -14.07 L-10.29 -14.16 L-10.16 -14.25 L-10.04 -14.34 L-9.91 -14.42 L-9.79 -14.51 L-9.66 -14.59 L-9.53 -14.68 L-9.40 -14.76 L-9.27 -14.84 L-9.14 -14.92 L-9.16 -15.24 L-9.19 -15.61 L-9.24 -16.00 L-9.29 -16.42 L-9.35 -16.86 L-9.40 -17.32 L-9.45 -17.78 L-9.50 -18.25 L-9.53 -18.71 L-9.37 -18.79 L-9.21 -18.87 L-9.04 -18.95 L-8.87 -19.03 L-8.71 -19.11 L-8.54 -19.18 L-8.37 -19.26 L-8.21 -19.33 L-8.04 -19.40 L-7.87 -19.47 L-7.70 -19.54 L-7.53 -19.61 L-7.35 -19.67 L-7.18 -19.73 L-7.01 -19.80 L-6.84 -19.86 L-6.66 -19.91 L-6.49 -19.97 L-6.31 -20.03 L-6.14 -20.08 L-5.96 -20.14 L-5.79 -20.19 L-5.61 -20.24 L-5.44 -20.28 L-5.25 -20.31 L-4.97 -19.93 L-4.69 -19.55 L-4.42 -19.17 L-4.17 -18.79 L-3.92 -18.43 L-3.68 -18.08 L-3.45 -17.76 L-3.24 -17.46 L-3.04 -17.23 L-2.89 -17.26 L-2.74 -17.28 L-2.59 -17.31 L-2.44 -17.33 L-2.28 -17.35 L-2.13 -17.37 L-1.98 -17.39 L-1.83 -17.40 L-1.68 -17.42 L-1.53 -17.43 L-1.37 -17.45 L-1.22 -17.46 L-1.08 -17.63 L-0.94 -17.96 L-0.80 -18.32 L-0.65 -18.71 L-0.50 -19.11 L-0.34 -19.54 L-0.17 -19.97 L-0.00 -20.40 L0.18 -20.84 L0.37 -21.00 L0.55 -20.99 L0.73 -20.99 L0.92 -20.98 L1.10 -20.97 L1.28 -20.96 L1.46 -20.95 L1.65 -20.94 L1.83 -20.92 L2.01 -20.90 L2.20 -20.88 L2.38 -20.87 L2.56 -20.84 L2.74 -20.82 L2.92 -20.80 L3.10 -20.77 L3.29 -20.74 L3.47 -20.71 L3.65 -20.68 L3.83 -20.65 L4.01 -20.61 L4.19 -20.58 L4.37 -20.54 L4.55 -20.50 L4.72 -20.46 L4.83 -20.13 L4.90 -19.67 L4.97 -19.20 L5.02 -18.75 L5.08 -18.30 L5.13 -17.88 L5.18 -17.47 L5.23 -17.10 L5.28 -16.75 L5.41 -16.64 L5.55 -16.60 L5.70 -16.55 L5.84 -16.50 L5.99 -16.44 L6.13 -16.39 L6.27 -16.34 L6.41 -16.28 L6.56 -16.23 L6.70 -16.17 L6.84 -16.11 L6.98 -16.05 L7.14 -16.03 L7.40 -16.25 L7.69 -16.49 L7.99 -16.76 L8.31 -17.04 L8.65 -17.34 L8.99 -17.64 L9.34 -17.95 L9.71 -18.25 L10.02 -18.46 L10.18 -18.37 L10.34 -18.28 L10.50 -18.19 L10.66 -18.09 L10.82 -18.00 L10.97 -17.91 L11.13 -17.81 L11.28 -17.71 L11.44 -17.61 L11.59 -17.51 L11.74 -17.41 L11.89 -17.31 L12.05 -17.20 L12.19 -17.10 L12.34 -16.99 L12.49 -16.88 L12.64 -16.77 L12.78 -16.66 L12.93 -16.55 L13.07 -16.43 L13.22 -16.32 L13.36 -16.20 L13.50 -16.09 L13.64 -15.97 L13.69 -15.75 L13.54 -15.31 L13.38 -14.86 L13.22 -14.43 L13.06 -14.01 L12.90 -13.60 L12.76 -13.21 L12.62 -12.84 L12.50 -12.50 L12.48 -12.27 L12.59 -12.16 L12.69 -12.05 L12.80 -11.93 L12.90 -11.82 L13.01 -11.71 L13.11 -11.60 L13.21 -11.48 L13.31 -11.37 L13.41 -11.25 L13.50 -11.13 L13.60 -11.01 L13.70 -10.89 L13.97 -10.92 L14.33 -11.00 L14.71 -11.09 L15.12 -11.19 L15.55 -11.29 L15.99 -11.40 L16.44 -11.51 L16.90 -11.61 L17.36 -11.71 L17.51 -11.59 L17.61 -11.44 L17.71 -11.28 L17.81 -11.13 L17.91 -10.97 L18.00 -10.82 L18.09 -10.66 L18.19 -10.50 L18.28 -10.34 L18.37 -10.18 L18.46 -10.02 L18.54 -9.86 L18.63 -9.70 L18.71 -9.53 L18.79 -9.37 L18.87 -9.21 L18.95 -9.04 L19.03 -8.87 L19.11 -8.71 L19.18 -8.54 L19.26 -8.37 L19.33 -8.21 L19.40 -8.04 L19.47 -7.87 L19.54 -7.70 L19.24 -7.38 L18.89 -7.06 L18.55 -6.75 L18.20 -6.45 L17.87 -6.15 L17.55 -5.87 L17.25 -5.61 L16.98 -5.35 L16.74 -5.12 L16.78 -4.97 L16.82 -4.82 L16.86 -4.68 L16.90 -4.53 L16.94 -4.38 L16.98 -4.23 L17.02 -4.09 L17.05 -3.94 L17.09 -3.79 L17.12 -3.64 L17.15 -3.49 L17.18 -3.34 L17.32 -3.21 L17.66 -3.11 L18.03 -3.02 L18.43 -2.92 L18.85 -2.82 L19.28 -2.71 L19.73 -2.60 L20.19 -2.48 L20.64 -2.35 L20.88 -2.20 L20.90 -2.01 L20.92 -1.83 L20.94 -1.65 L20.95 -1.46 L20.96 -1.28 L20.97 -1.10 L20.98 -0.92 L20.99 -0.73 L20.99 -0.55 L21.00 -0.37 L21.00 -0.18 Z"/>
<ellipse cx="-0.6" cy="0" rx="8.6" ry="10.4" fill="#4d4f86"/>
<ellipse cx="0.7" cy="0.2" rx="7.6" ry="10" fill="#fff"/>
</g>
</svg>
<div class="r" style="left:578px;top:39px;width:260px;height:116px;background:#f0f0f0;border:1px solid #cfcfcf;box-sizing:border-box;box-shadow:2px 2px 3px rgba(0,0,0,0.35)"></div>
<div class="t" style="left:615px;top:46.80px;font-size:15px;line-height:15px;font-weight:400;color:#000;">Make transparent</div>
<div class="t" style="left:778px;top:46.80px;font-size:15px;line-height:15px;font-weight:400;color:#000;">Alt+T</div>
<div class="t" style="left:615px;top:70.90px;font-size:15px;line-height:15px;font-weight:400;color:#000;">Minimize to tray</div>
<div class="t" style="left:615px;top:95.10px;font-size:15px;line-height:15px;font-weight:400;color:#000;">Roll up</div>
<div class="r" style="left:610px;top:117px;width:225px;height:1px;background:#d7d7d7"></div>
<div class="r" style="left:610px;top:124px;width:225px;height:1px;background:#d7d7d7"></div>
<svg class="r" style="left:589px;top:136px" width="10" height="9" viewBox="0 0 10 9"><path d="M1 0.8L9 8.2M9 0.8L1 8.2" stroke="#111" stroke-width="2"/></svg>
<div class="t" style="left:615px;top:134.18px;font-size:14.2px;line-height:14.2px;font-weight:700;color:#000;"><u>S</u>chließen</div>
<div class="t" style="left:766.5px;top:133.93px;font-size:14.5px;line-height:14.5px;font-weight:700;color:#000;">Alt<span style="font-weight:400;margin:0 1.5px 0 1px">+</span>F4</div>
</body></html>
